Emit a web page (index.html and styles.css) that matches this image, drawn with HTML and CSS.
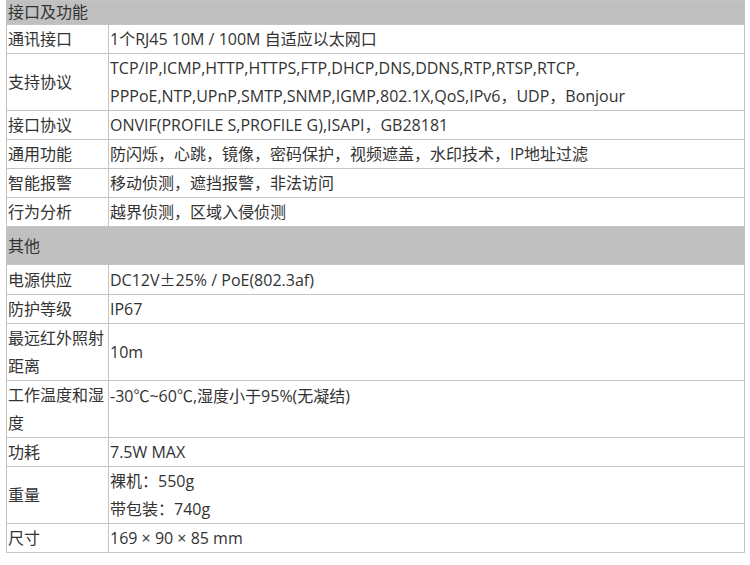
FILE: index.html
```html
<!DOCTYPE html>
<html lang="zh-CN">
<head>
    <meta charset="UTF-8">
    <meta name="viewport" content="width=device-width, initial-scale=1.0">
    <title>规格参数</title>
    <link rel="stylesheet" href="styles.css">
</head>
<body>
    <table class="spec">
        <tr class="group first">
            <td colspan="2">接口及功能</td>
        </tr>
        <tr>
            <td class="label">通讯接口</td>
            <td>1个RJ45 10M / 100M 自适应以太网口</td>
        </tr>
        <tr>
            <td class="label">支持协议</td>
            <td>TCP/IP,ICMP,HTTP,HTTPS,FTP,DHCP,DNS,DDNS,RTP,RTSP,RTCP,<br>PPPoE,NTP,UPnP,SMTP,SNMP,IGMP,802.1X,QoS,IPv6，UDP，Bonjour</td>
        </tr>
        <tr>
            <td class="label">接口协议</td>
            <td>ONVIF(PROFILE S,PROFILE G),ISAPI，GB28181</td>
        </tr>
        <tr>
            <td class="label">通用功能</td>
            <td>防闪烁，心跳，镜像，密码保护，视频遮盖，水印技术，IP地址过滤</td>
        </tr>
        <tr>
            <td class="label">智能报警</td>
            <td>移动侦测，遮挡报警，非法访问</td>
        </tr>
        <tr>
            <td class="label">行为分析</td>
            <td>越界侦测，区域入侵侦测</td>
        </tr>
        <tr class="group">
            <td colspan="2">其他</td>
        </tr>
        <tr>
            <td class="label">电源供应</td>
            <td>DC12V<span class="cjk">±</span>25% / PoE(802.3af)</td>
        </tr>
        <tr>
            <td class="label">防护等级</td>
            <td>IP67</td>
        </tr>
        <tr>
            <td class="label">最远红外照射距离</td>
            <td>10m</td>
        </tr>
        <tr>
            <td class="label">工作温度和湿度</td>
            <td class="top">-30<span class="cjk">℃</span>~60<span class="cjk">℃</span>,湿度小于95%(无凝结)</td>
        </tr>
        <tr>
            <td class="label">功耗</td>
            <td>7.5W MAX</td>
        </tr>
        <tr>
            <td class="label">重量</td>
            <td>裸机：550g<br>带包装：740g</td>
        </tr>
        <tr>
            <td class="label">尺寸</td>
            <td>169 × 90 × 85 mm</td>
        </tr>
    </table>
</body>
</html>
```

FILE: styles.css
```css
body {
    margin: 0 0 0 6px;
    background: #ffffff;
    font-family: "Open Sans", "Noto Sans CJK SC", sans-serif;
    font-size: 16px;
    color: #333333;
}

.spec {
    width: 739px;
    border-collapse: collapse;
    border: 1px solid #c4c4c4;
}

.spec td {
    padding: 0 1px;
    line-height: 28px;
    border: 1px solid #c4c4c4;
    vertical-align: middle;
}

.spec td.label {
    width: 99px;
}

.spec td.top {
    vertical-align: top;
}

.cjk {
    font-family: "Noto Sans CJK SC", sans-serif;
}

.group td {
    background: #c0c0c0;
    padding-top: 5px;
    padding-bottom: 4px;
}

.group.first td {
    line-height: 22px;
    padding-top: 0;
    padding-bottom: 1px;
}
```
